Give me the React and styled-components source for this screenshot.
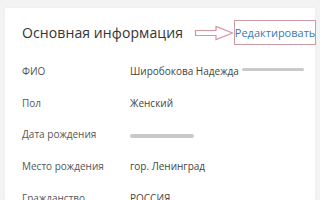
import React from "react";
import styled, { createGlobalStyle } from "styled-components";

const Global = createGlobalStyle`
  html, body { margin: 0; padding: 0; background: #f3f3f3; }
  body { width: 320px; height: 200px; overflow: hidden; font-family: "Open Sans", "Noto Sans", sans-serif; }
`;

const Page = styled.div`
  padding: 8px 5px 0 5px;
  height: 200px;
  box-sizing: border-box;
  overflow: hidden;
`;

const Card = styled.section`
  background: #fff;
  box-shadow: 0 0 2px rgba(0, 0, 0, 0.06);
  padding: 12px 2px 0 17px;
  height: 192px;
  box-sizing: border-box;
`;

const Header = styled.div`
  display: flex;
  align-items: center;
  height: 25px;
`;

const Title = styled.h2`
  margin: 0;
  font-size: 14px;
  font-weight: 400;
  color: #333;
  letter-spacing: 0.1px;
  white-space: nowrap;
`;

const Arrow = styled.svg`
  display: block;
  margin-left: 11px;
  flex: none;
`;

const EditBox = styled.a`
  display: flex;
  align-items: center;
  justify-content: center;
  box-sizing: border-box;
  width: 82px;
  height: 25px;
  margin-left: auto;
  flex: none;
  border: 1px solid #cf9aa3;
  color: #3a79b4;
  font-size: 11px;
  text-decoration: none;
  white-space: nowrap;
`;

const Rows = styled.div`
  margin-top: 10px;
`;

const Row = styled.div`
  display: grid;
  grid-template-columns: 108px 1fr;
  align-items: center;
  height: 31.7px;
  font-size: 10px;
`;

const Label = styled.div`
  color: #555;
`;

const Value = styled.div`
  color: #444;
  display: flex;
  align-items: center;
  white-space: nowrap;
`;

const Blur = styled.span`
  display: inline-block;
  width: ${(p) => p.$w}px;
  height: ${(p) => p.$h}px;
  margin-left: ${(p) => p.$ml || 0}px;
  margin-top: ${(p) => p.$mt || 0}px;
  background: #c9c9c9;
  border-radius: 2px;
`;

const data = [
  ["ФИО", <>Широбокова Надежда<Blur $w={62} $h={3} $ml={3} $mt={-3} /></>],
  ["Пол", "Женский"],
  ["Дата рождения", <Blur $w={64} $h={4} $mt={3} />],
  ["Место рождения", "гор. Ленинград"],
  ["Гражданство", "РОССИЯ"],
];

export default function App() {
  return (
    <>
      <Global />
      <Page>
        <Card>
          <Header>
            <Title>Основная информация</Title>
            <Arrow width="40" height="16" viewBox="0 0 40 16">
              <path
                d="M1.5 5.5 H22 V1.5 L38.5 8 L22 14.5 V10.5 H1.5 Z"
                fill="#fff"
                stroke="#d4959f"
                strokeWidth="1.2"
                strokeLinejoin="miter"
              />
            </Arrow>
            <EditBox href="#">Редактировать</EditBox>
          </Header>
          <Rows>
            {data.map(([l, v]) => (
              <Row key={l}>
                <Label>{l}</Label>
                <Value>{v}</Value>
              </Row>
            ))}
          </Rows>
        </Card>
      </Page>
    </>
  );
}
